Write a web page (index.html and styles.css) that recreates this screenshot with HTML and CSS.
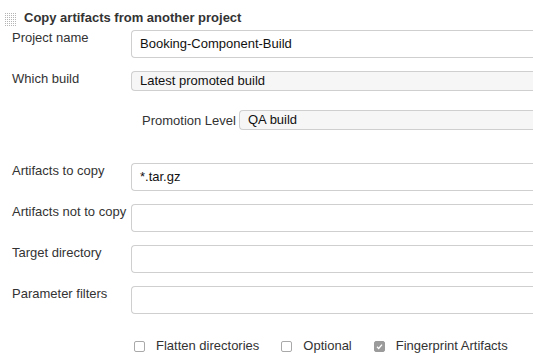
FILE: index.html
```html
<!DOCTYPE html>
<html>
<head>
<meta charset="utf-8">
<link rel="stylesheet" href="styles.css">
</head>
<body>
<div class="section">
  <div class="header">
    <svg class="grip" width="11" height="13" viewBox="0 0 11 13">
      <defs>
        <pattern id="dots" width="2" height="2" patternUnits="userSpaceOnUse">
          <rect x="0" y="0" width="1" height="1" fill="#b4b4b4"/>
        </pattern>
      </defs>
      <rect x="0" y="0" width="11" height="13" fill="url(#dots)"/>
    </svg>
    <span class="title">Copy artifacts from another project</span>
  </div>

  <div class="row row-first">
    <div class="label">Project name</div>
    <div class="field"><div class="input">Booking-Component-Build</div></div>
  </div>

  <div class="row row-select">
    <div class="label">Which build</div>
    <div class="field"><div class="select">Latest promoted build</div></div>
  </div>

  <div class="row row-promo">
    <div class="label"></div>
    <div class="field promo">
      <div class="promo-label">Promotion Level</div>
      <div class="select">QA build</div>
    </div>
  </div>

  <div class="row row-artifacts">
    <div class="label">Artifacts to copy</div>
    <div class="field"><div class="input">*.tar.gz</div></div>
  </div>

  <div class="row">
    <div class="label">Artifacts not to copy</div>
    <div class="field"><div class="input"></div></div>
  </div>

  <div class="row">
    <div class="label">Target directory</div>
    <div class="field"><div class="input"></div></div>
  </div>

  <div class="row">
    <div class="label">Parameter filters</div>
    <div class="field"><div class="input"></div></div>
  </div>

  <div class="row row-checks">
    <div class="label"></div>
    <div class="field checks">
      <label class="check"><span class="box"></span>Flatten directories</label>
      <label class="check"><span class="box"></span>Optional</label>
      <label class="check"><span class="box checked"><svg width="11" height="11" viewBox="0 0 11 11"><path d="M3 5.8 L4.7 7.5 L8 3.6" fill="none" stroke="#fff" stroke-width="1.3"/></svg></span>Fingerprint Artifacts</label>
    </div>
  </div>
</div>
</body>
</html>
```

FILE: styles.css
```css
html, body {
  margin: 0;
  padding: 0;
  background: #fff;
  overflow: hidden;
}

body {
  font-family: "Liberation Sans", Arial, Helvetica, sans-serif;
  font-size: 13px;
  color: #333;
  width: 533px;
  height: 355px;
}

.section {
  padding-top: 10px;
}

.header {
  display: flex;
  align-items: center;
  height: 16px;
  line-height: 16px;
}

.grip {
  margin-left: 5px;
  margin-top: 3px;
  flex: none;
}

.title {
  margin-left: 8px;
  font-weight: bold;
  color: #333;
}

.row {
  display: flex;
  align-items: flex-start;
  margin-top: 13px;
}

.row-first {
  margin-top: 4px;
}

.row-promo {
  margin-top: 19px;
}

.row-artifacts {
  margin-top: 33px;
}

.row-checks {
  margin-top: 24px;
}

.label {
  flex: none;
  width: 119px;
  padding-left: 12px;
  line-height: 16px;
  color: #333;
}

.field {
  flex: 1;
  min-width: 0;
}

.input {
  box-sizing: border-box;
  height: 28px;
  border: 1px solid #cfcfcf;
  border-right: none;
  border-radius: 4px 0 0 4px;
  background: #fff;
  padding-left: 8px;
  line-height: 26px;
  color: #111;
}

.select {
  box-sizing: border-box;
  height: 20px;
  border: 1px solid #cfcfcf;
  border-right: none;
  border-radius: 4px 0 0 4px;
  background: #f6f6f6;
  padding-left: 8px;
  line-height: 18px;
  color: #111;
}

.promo {
  display: flex;
  align-items: center;
  padding-left: 11px;
}

.promo-label {
  flex: none;
  margin-right: 3px;
  color: #333;
}

.promo .select {
  flex: 1;
}

.checks {
  display: flex;
  align-items: center;
  height: 16px;
  line-height: 16px;
  padding-left: 3px;
  gap: 22px;
}

.check {
  display: flex;
  align-items: center;
  gap: 11px;
  color: #333;
}

.box {
  box-sizing: border-box;
  width: 11px;
  height: 11px;
  border: 1px solid #a9a9a9;
  border-radius: 2px;
  background: #fff;
  display: block;
}

.box.checked {
  background: #9b9b9b;
  border-color: #9b9b9b;
  position: relative;
}

.box.checked svg {
  position: absolute;
  left: -1px;
  top: -1px;
}
```
